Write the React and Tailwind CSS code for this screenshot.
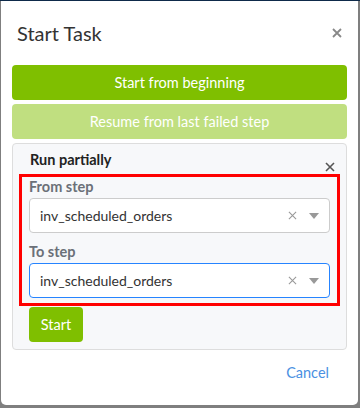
import React from "react";

function Caret() {
  return (
    <svg width="10" height="6" viewBox="0 0 10 6" className="block">
      <path d="M0 0 L10 0 L5 6 Z" fill="#999" />
    </svg>
  );
}

function XIcon({ size = 10, color = "#999", stroke = 1.3 }) {
  return (
    <svg width={size} height={size} viewBox="0 0 10 10" className="block">
      <path d="M1 1 L9 9 M9 1 L1 9" stroke={color} strokeWidth={stroke} />
    </svg>
  );
}

function Select({ focused }) {
  return (
    <div
      className={`h-[35px] bg-white rounded-[4px] border flex items-center pl-[10px] pr-[10px] ${
        focused ? "border-[#2684ff]" : "border-[#cccccc]"
      }`}
    >
      <span className="flex-1 text-[14px] text-[#333]">inv_scheduled_orders</span>
      <div className="flex items-center gap-[12px]">
        <XIcon size={9} color="#999" stroke={1.2} />
        <Caret />
      </div>
    </div>
  );
}

export default function App() {
  return (
    <div
      className="w-[360px] h-[408px] bg-[#7f7f7f] relative overflow-hidden"
      style={{ fontFamily: 'Lato, "Open Sans", sans-serif' }}
    >
      <div className="absolute top-0 left-0 right-0 h-[1px] bg-[#0e2a4a]" />
      <div className="absolute left-[1px] top-[1px] w-[357px] h-[404px] bg-white rounded-b-[5px] flex flex-col">
        <div className="flex items-center justify-between pl-[16px] pr-[16px] h-[64px]">
          <span className="text-[20px] text-[#333]">Start Task</span>
          <XIcon size={10} color="#888" stroke={1.8} />
        </div>
        <div className="px-[11px] flex flex-col gap-[4px]">
          <div className="h-[35px] rounded-[4px] bg-[#7fbf00] text-white text-[14.5px] flex items-center justify-center">
            Start from beginning
          </div>
          <div className="h-[35px] rounded-[4px] bg-[#c0df80] text-white text-[14.5px] flex items-center justify-center">
            Resume from last failed step
          </div>
          <div className="bg-[#f7f8fa] border border-[#dddddd] rounded-[4px] h-[207px] px-[6px] pt-[6px]">
            <div className="flex justify-between items-start pl-[11px] pr-[5px] h-[24px]">
              <span className="text-[14.5px] font-bold text-[#222] leading-[20px]">Run partially</span>
              <div className="mt-[12px]">
                <XIcon size={10} color="#555" stroke={1.6} />
              </div>
            </div>
            <div className="border-[3px] border-[#ff0000] px-[7px] pt-0 pb-[5px]">
              <div className="text-[14.5px] font-bold text-[#6b7078] leading-[20px] mb-[1px]">From step</div>
              <Select />
              <div className="text-[14.5px] font-bold text-[#6b7078] leading-[20px] mt-[9px] mb-[1px]">To step</div>
              <Select focused />
            </div>
            <div className="pl-[10px] mt-[1px]">
              <div className="w-[54px] h-[35px] rounded-[4px] bg-[#7fbf00] text-white text-[14.5px] flex items-center justify-center">
                Start
              </div>
            </div>
          </div>
        </div>
        <div className="flex justify-end pr-[29px] mt-[12px]">
          <span className="text-[14.5px] text-[#4a90e2]">Cancel</span>
        </div>
      </div>
    </div>
  );
}
